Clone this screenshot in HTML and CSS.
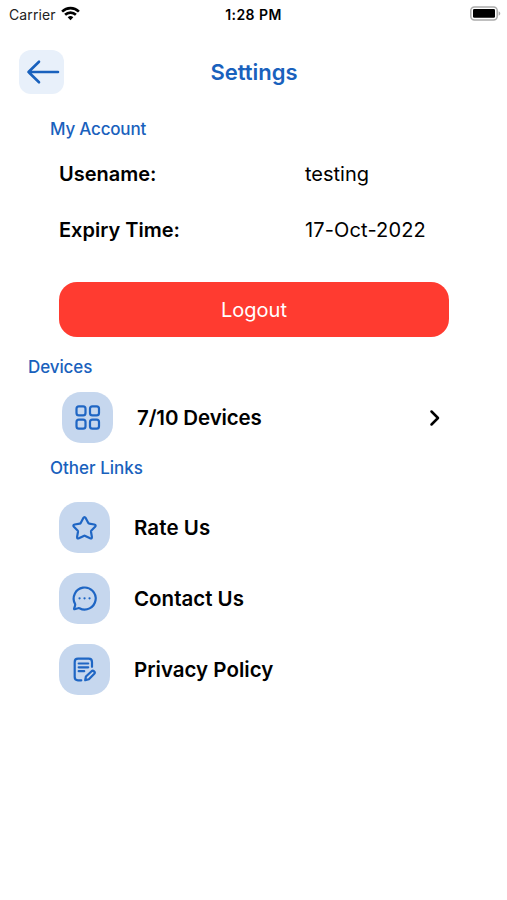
FILE: index.html
```html
<!DOCTYPE html>
<html lang="en">
<head>
<meta charset="utf-8">
<title>Settings</title>
<link rel="stylesheet" href="styles.css">
</head>
<body>
<div class="status">
  <div class="carrier"><span class="carrier-name">Carrier</span>
    <svg width="19" height="15" viewBox="0 0 19 15" fill="none" stroke="#000" stroke-width="2.6"><path d="M1.1 5.6a12 12 0 0 1 16.8 0M4.1 8.8a7.7 7.7 0 0 1 10.8 0"/><path d="M9.5 14.2 6.7 11.3a4 4 0 0 1 5.6 0Z" fill="#000" stroke="none"/></svg>
  </div>
  <time class="clock">1:28 PM</time>
  <svg class="battery" width="31" height="15" viewBox="0 0 31 15"><rect x=".8" y=".9" width="26.4" height="13" rx="3.6" fill="#fff" stroke="#aaa" stroke-width="1.5"/><rect x="3" y="3" width="22" height="8.8" rx="1.3"/><path d="M28.6 5.2c2.2.9 2.2 3.6 0 4.5Z" fill="#aaa"/></svg>
</div>
<header class="header">
  <button class="back" aria-label="Back"><svg width="44" height="44" viewBox="0 0 44 44" fill="none" stroke="#1961bd" stroke-width="2.6" stroke-linecap="round" stroke-linejoin="round"><path d="M39 22H9.5M20 11.7 9.5 22 20 32.3"/></svg></button>
  <h1 class="title">Settings</h1>
</header>
<main>
  <h2 class="section account">My Account</h2>
  <dl class="details">
    <dt>Usename:</dt><dd>testing</dd>
    <dt>Expiry Time:</dt><dd class="date">17-Oct-2022</dd>
  </dl>
  <button class="logout">Logout</button>
  <h2 class="section devices">Devices</h2>
  <a class="row device-row">
    <span class="tile"><svg width="51" height="51" viewBox="0 0 51 51"><rect x="14.5" y="14.3" width="9" height="9" rx="2.4"/><rect x="28" y="14.3" width="9" height="9" rx="2.4"/><rect x="14.5" y="27.7" width="9" height="9" rx="2.4"/><rect x="28" y="27.7" width="9" height="9" rx="2.4"/></svg></span>
    <span class="label count">7/10 Devices</span>
    <svg class="chevron" width="12" height="18" viewBox="0 0 12 18" fill="none" stroke="#000" stroke-width="2.5" stroke-linecap="round" stroke-linejoin="round"><path d="m2.5 2.5 6.5 6.5-6.5 6.5"/></svg>
  </a>
  <h2 class="section links-title">Other Links</h2>
  <nav class="links">
    <a class="row"><span class="tile"><svg width="51" height="51" viewBox="0 0 51 51"><path d="M24.2 16.2q1.3-2 2.6 0l2.5 4.8q.3.6 1 .7l5 .8q2.2.5.8 2.2l-3.7 3.8q-.5.5-.4 1.2l.9 5.2q.2 2.2-1.8 1.4l-4.8-2.4q-.8-.4-1.6 0l-4.8 2.4q-2 .8-1.8-1.4l.9-5.2q.1-.7-.4-1.2l-3.7-3.8q-1.4-1.7.8-2.2l5-.8q.7-.1 1-.7Z"/></svg></span><span class="label rate">Rate Us</span></a>
    <a class="row"><span class="tile"><svg width="51" height="51" viewBox="0 0 51 51"><path d="M20.5 35.2A11 11 0 1 0 16 30.7q.4.9.1 1.8l-1 3.1q-.2.7.5.6l3.3-.9q.8-.3 1.6-.1Z"/><path class="dots" d="M20.5 25.3h.1M25.5 25.3h.1M30.5 25.3h.1"/></svg></span><span class="label">Contact Us</span></a>
    <a class="row"><span class="tile"><svg width="51" height="51" viewBox="0 0 51 51"><path d="M33 22.8V18q0-3.3-3.3-3.3H19q-3.3 0-3.3 3.3v15q0 3.3 3.3 3.3h3.3M19.7 19.5h9.5M19.7 23.3h9.5M19.7 27.2h5.5"/><path d="m26.2 36.2.7-3.7 5.7-5.3q1.2-1 2.5.2t.2 2.4l-5.4 5.5Z"/></svg></span><span class="label">Privacy Policy</span></a>
  </nav>
</main>
</body>
</html>
```
FILE: styles.css
```css
* { box-sizing: border-box; }
body { margin: 0; height: 900px; background: #fff; color: #000; font-family: Inter, sans-serif; overflow: hidden; }
h1, h2, dl, dd { margin: 0; }
button { border: 0; padding: 0; font-family: inherit; }
svg { display: block; }
span, time { white-space: nowrap; }
.status { height: 28px; padding: 0 6px 0 9px; display: grid; grid-template-columns: 1fr auto 1fr; align-items: center; font-size: 14px; }
.carrier { display: flex; align-items: center; gap: 6px; color: #222; letter-spacing: .1px; }
.carrier svg { margin: -2px 0 0 -1px; }
.clock { font-weight: 600; letter-spacing: .45px; margin-left: -3px; }
.battery { justify-self: end; margin-top: -2px; }
.header { height: 66px; padding: 22px 19px 0; display: grid; grid-template-columns: 45px 1fr 45px; }
.back { width: 45px; height: 44px; border-radius: 12px; background: #e8f0fa; }
.title { display: flex; justify-content: center; align-items: center; color: #1961bd; font-size: 22px; font-weight: 600; padding-left: 1px; }
.section { display: flex; align-items: center; color: #1961bd; font-size: 17px; font-weight: 550; height: 24px; }
.account { margin: 23px 0 0 50px; letter-spacing: -.2px; }
.details { margin: 5px 59px 0; display: grid; grid-template-columns: 246px 1fr; grid-auto-rows: 56px; align-items: center; font-size: 20px; }
.details dt { font-weight: 600; }
.date { letter-spacing: .15px; }
.logout { display: flex; align-items: center; justify-content: center; margin: 24px 58px 0 59px; width: 390px; height: 55px; border-radius: 18px; background: #ff3b30; color: #fff; font-size: 20px; }
.devices { margin: 18px 0 0 28px; letter-spacing: -.1px; }
.row { display: flex; align-items: center; gap: 24px; height: 51px; }
.device-row { margin: 13px 66px 0 62px; }
.tile { width: 51px; height: 51px; border-radius: 19px; background: #c6d7ee; }
.tile svg { fill: none; stroke: #1f66c4; stroke-width: 2.2; stroke-linecap: round; stroke-linejoin: round; }
.tile .dots { stroke-width: 2.2; }
.label { font-size: 20.5px; font-weight: 600; letter-spacing: 0; }
.count { letter-spacing: -.12px; }
.rate { letter-spacing: .1px; }
.chevron { margin-left: auto; }
.links-title { margin: 13px 0 0 50px; }
.links { margin: 22px 0 0 59px; display: flex; flex-direction: column; gap: 20px; }
```
